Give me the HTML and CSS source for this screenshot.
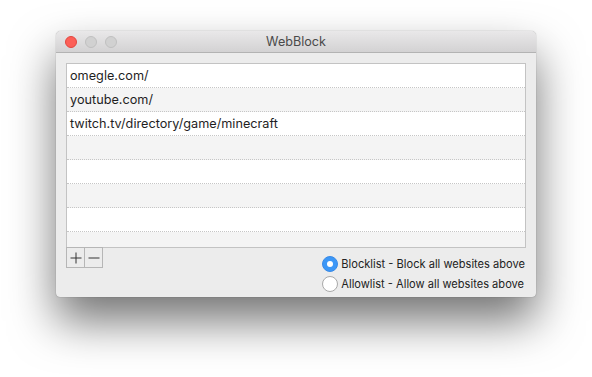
FILE: index.html
```html
<!DOCTYPE html>
<html>
<head>
<meta charset="utf-8">
<link rel="stylesheet" href="styles.css">
</head>
<body>
<div class="window">
  <div class="titlebar">
    <div class="lights">
      <span class="light close"></span>
      <span class="light off"></span>
      <span class="light off"></span>
    </div>
    <div class="title">WebBlock</div>
  </div>
  <div class="content">
    <div class="table">
      <div class="row">omegle.com/</div>
      <div class="row">youtube.com/</div>
      <div class="row">twitch.tv/directory/game/minecraft</div>
      <div class="row"></div>
      <div class="row"></div>
      <div class="row"></div>
      <div class="row"></div>
      <div class="row last"></div>
    </div>
    <div class="footer">
      <div class="buttons">
        <span class="btn">
          <svg width="12" height="12" viewBox="0 0 12 12"><path d="M6 0.5V11.5M0.5 6H11.5" stroke="#333" stroke-width="1" fill="none"/></svg>
        </span>
        <span class="btn">
          <svg width="12" height="12" viewBox="0 0 12 12"><path d="M0.5 6H11.5" stroke="#333" stroke-width="1" fill="none"/></svg>
        </span>
      </div>
      <div class="options">
        <label class="option"><span class="radio on"></span>Blocklist - Block all websites above</label>
        <label class="option"><span class="radio"></span>Allowlist - Allow all websites above</label>
      </div>
    </div>
  </div>
</div>
</body>
</html>
```

FILE: styles.css
```css
html {
  margin: 0;
  padding: 0;
  height: 100%;
  background: #ffffff;
}
body {
  margin: 0;
  height: 100%;
  box-sizing: border-box;
  padding: 31px 0 0 56px;
  font-family: Inter, "Liberation Sans", sans-serif;
}
.window {
  width: 480px;
  height: 266px;
  background: #ececec;
  border-radius: 5px 5px 4px 4px;
  box-shadow: 0 24px 46px rgba(0,0,0,0.55), 0 0 1px rgba(0,0,0,0.5);
  display: flex;
  flex-direction: column;
}
.titlebar {
  height: 21px;
  border-bottom: 1px solid #b3b3b3;
  border-radius: 5px 5px 0 0;
  background: linear-gradient(#e9e8e9, #d3d2d3);
  display: flex;
  align-items: center;
  position: relative;
}
.lights {
  display: flex;
  gap: 8px;
  padding-left: 9px;
}
.light {
  width: 12px;
  height: 12px;
  border-radius: 50%;
  box-sizing: border-box;
}
.light.close {
  background: #fc5f57;
  border: 1px solid #e2463f;
}
.light.off {
  background: #d1d1d1;
  border: 1px solid #c0c0c0;
}
.title {
  position: absolute;
  left: 0;
  right: 0;
  top: 0;
  line-height: 22px;
  text-align: center;
  font-size: 12.6px;
  color: #4a4a4a;
}
.content {
  padding: 10px 10px 0 10px;
  flex: 1;
}
.table {
  height: 183px;
  border: 1px solid #c3c3c3;
  background: #ffffff;
  overflow: hidden;
}
.row {
  height: 23px;
  border-bottom: 1px dotted #c6c6c6;
  padding-left: 3px;
  font-size: 12.7px;
  line-height: 24px;
  color: #1f1f1f;
}
.row:nth-child(even) {
  background: #f4f4f4;
}
.footer {
  display: flex;
  justify-content: space-between;
  align-items: flex-start;
}
.buttons {
  display: flex;
  margin-top: -1px;
}
.btn {
  width: 17px;
  height: 19px;
  border: 1px solid #b6b6b6;
  background: #ececec;
  display: flex;
  align-items: center;
  justify-content: center;
}
.btn + .btn {
  border-left: none;
}
.options {
  display: flex;
  flex-direction: column;
  gap: 4px;
  padding-top: 8px;
  padding-right: 1px;
}
.option {
  display: flex;
  align-items: center;
  font-size: 11.1px;
  color: #222222;
  height: 16px;
}
.radio {
  width: 16px;
  height: 16px;
  box-sizing: border-box;
  border-radius: 50%;
  border: 1px solid #a9a9a9;
  background: #ffffff;
  margin-right: 3px;
  display: flex;
  align-items: center;
  justify-content: center;
}
.radio.on {
  background: #3c97f7;
  border-color: #3a8ae6;
}
.radio.on::after {
  content: "";
  width: 6px;
  height: 6px;
  border-radius: 50%;
  background: #ffffff;
}
```
